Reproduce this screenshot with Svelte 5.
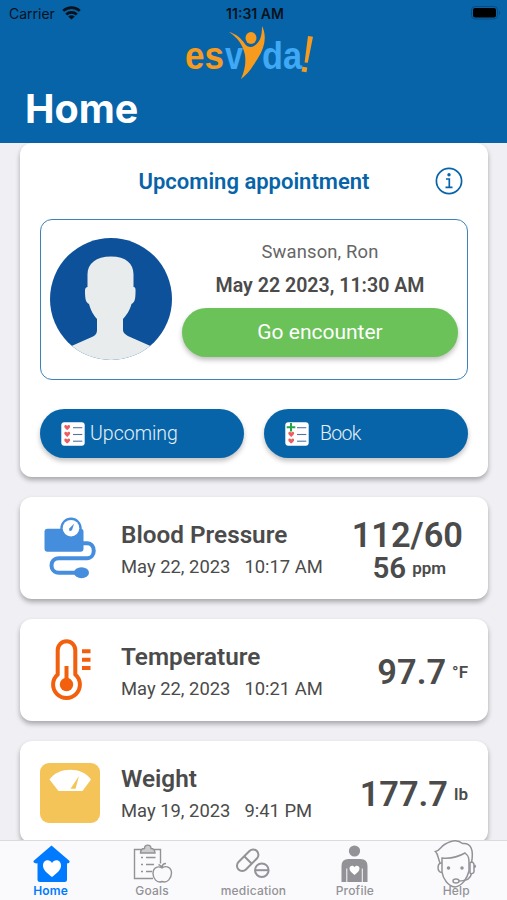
<script lang="ts">
type Reading = {
	id: string;
	title: string;
	date: string;
	time: string;
	value: string;
	unit?: string;
	second?: { value: string; unit: string };
};

const readings: Reading[] = [
	{
		id: 'pressure',
		title: 'Blood Pressure',
		date: 'May 22, 2023',
		time: '10:17 AM',
		value: '112/60',
		second: { value: '56', unit: 'ppm' },
	},
	{ id: 'temperature', title: 'Temperature', date: 'May 22, 2023', time: '10:21 AM', value: '97.7', unit: '°F' },
	{ id: 'weight', title: 'Weight', date: 'May 19, 2023', time: '9:41 PM', value: '177.7', unit: 'lb' },
];

const tabs = [
	{ id: 'home', label: 'Home' },
	{ id: 'goals', label: 'Goals' },
	{ id: 'medication', label: 'medication' },
	{ id: 'profile', label: 'Profile' },
	{ id: 'help', label: 'Help' },
];

let activeTab = $state('home');
</script>

{#snippet listIcon(withPlus: boolean)}
	<svg class="list-icon" viewBox="0 0 24 24">
		<rect x="0.3" y="0.3" width="23.4" height="23.4" rx="3" fill="#fff" />
		{#each [5.5, 12.3, 19] as y, i}
			{#if withPlus && i === 0}
				<path d="M6 1v8.6M1.7 5.3h8.6" stroke="#22a447" stroke-width="2" />
			{:else}
				<path
					transform="translate(6.2 {y})"
					d="M0 2.6C-1.5 1.4-2.9.3-2.9-1c0-1.7 2-2 2.9-.6C.9-3 2.9-2.7 2.9-1 2.9.3 1.5 1.4 0 2.6z"
					fill="#ee5d5d"
				/>
			{/if}
			<path d="M12 {y + 0.2}h9.3" stroke="#54749f" stroke-width="1.1" />
		{/each}
	</svg>
{/snippet}

<div class="app">
	<header>
		<div class="status-bar">
			<div class="carrier">
				<span>Carrier</span>
				<svg class="wifi" viewBox="0 0 19 14">
					<path d="M1.2 4.9a12 12 0 0 1 16.6 0" />
					<path d="M4.2 8.4a7.7 7.7 0 0 1 10.6 0" />
					<path d="M9.5 13.6 6.3 10.6a4.6 4.6 0 0 1 6.4 0z" class="dot" />
				</svg>
			</div>
			<span class="time">11:31 AM</span>
			<svg class="battery" viewBox="0 0 30 14">
				<rect x="0.5" y="0.5" width="26" height="12.5" rx="3.5" fill="none" stroke="#064b80" />
				<rect x="2" y="2" width="23" height="9.5" rx="2" />
				<path d="M28 4.5q2 2 0 4.5z" fill="#064b80" />
			</svg>
		</div>
		<svg class="logo" viewBox="0 0 132 54">
			<text x="0" y="42.500" fill="#f79b1e" textLength="39" lengthAdjust="spacingAndGlyphs">es</text>
			<text x="40" y="42.500" fill="#3fa9f5" textLength="18" lengthAdjust="spacingAndGlyphs">v</text>
			<text x="77" y="42.500" fill="#3fa9f5" textLength="40" lengthAdjust="spacingAndGlyphs">da</text>
			<path
				d="M44 6c7 2 12 6 16 12 2 3 6 4 9 2 6-4 8-9 8-20 5 10 3 21-4 32-5 8-9 15-17 21 4-9 5-16 4-24C58 19 53 12 44 6z"
				fill="#f79b1e"
			/>
			<ellipse cx="66" cy="12" rx="5.5" ry="6" fill="#f79b1e" />
			<path d="m123 10 5 .8-5.2 26-3.2-.4zM117.5 40.8l4.8.8-.8 4.6-5-.8z" fill="#f79b1e" />
		</svg>
		<h1>Home</h1>
	</header>

	<main>
		<section class="card appointment">
			<div class="appointment-title">
				<h2>Upcoming appointment</h2>
				<svg class="info" viewBox="0 0 28 28">
					<circle cx="14" cy="14" r="12.6" />
					<path d="M11 12h3.3v8M10.5 20.4h7" />
					<circle cx="14" cy="7.8" r="1.7" class="dot" />
				</svg>
			</div>

			<div class="encounter">
				<svg class="avatar" viewBox="0 0 122 122">
					<clipPath id="avatar-clip"><circle cx="61" cy="61" r="61" /></clipPath>
					<g clip-path="url(#avatar-clip)">
						<rect width="122" height="122" fill="#0e519b" />
						<path
							d="M61 18.500c15 0 22.500 7 22.500 18V49c2 0 2.200 2 2 6-.2 6-.5 9-4 11-2 7-5 11-8.500 15v11c0 3 3 5 6 6.500l21.500 9.500V122h-79v-14L43 98.500c3-1.500 4-3.500 4-6.500V81c-3.500-4-6-8-8-15-3.500-2-3.700-5-4-11-.2-4 .3-6 2.500-6V36.500c0-11 8.500-18 23.500-18z"
							fill="#e8ecec"
						/>
					</g>
				</svg>
				<div class="encounter-info">
					<span class="doctor">Swanson, Ron</span>
					<span class="when">May 22 2023, 11:30 AM</span>
					<button class="go">Go encounter</button>
				</div>
			</div>

			<div class="actions">
				<button class="action">
					{@render listIcon(false)}
					<span>Upcoming</span>
				</button>
				<button class="action book">
					{@render listIcon(true)}
					<span>Book</span>
				</button>
			</div>
		</section>

		{#each readings as reading}
			<section class="card reading">
				<svg class="reading-icon" viewBox="0 0 60 80">
					{#if reading.id === 'pressure'}
						<g transform="translate(0 2.2)">
							<g fill="#458ddd">
								<rect x="4.500" y="18.500" width="39" height="23" rx="3" />
								<circle cx="31" cy="18" r="10.700" />
								<ellipse cx="41.500" cy="62.500" rx="7.500" ry="5.500" />
							</g>
							<path d="M43 33h4c9 0 9 15 0 15H19c-10 0-10 14.500 0 14.500h17" fill="none" stroke="#458ddd" stroke-width="4" />
							<circle cx="31" cy="18" r="8.300" fill="#fff" />
							<path d="m34 13.500-2 6.500-2.500 1-.5-2.500z" fill="#458ddd" />
						</g>
					{:else if reading.id === 'temperature'}
						<path
							d="M17.700 44.400V20.100a8.800 8.800 0 0 1 17.600 0v24.300a13.400 13.400 0 1 1-17.600 0z"
							fill="none"
							stroke="#f2600d"
							stroke-width="4"
						/>
						<circle cx="26.500" cy="54.500" r="6.700" fill="#f2600d" />
						<path d="M26.500 36v16M42 21.300h8.500M42 29.700h8.500M42 38h8.500" stroke="#f2600d" stroke-width="4" />
					{:else}
						<rect y="11" width="60" height="60" rx="9" fill="#f4c459" />
						<path d="M9.500 27.500c9-13 32.500-13 41.500 0L42.500 39H18.500z" fill="#fff" />
						<path d="m39 24-3.500 12.800h-5z" fill="#f4c459" />
					{/if}
				</svg>
				<div class="reading-info">
					<h3>{reading.title}</h3>
					<p>
						<span>{reading.date}</span>
						<span>{reading.time}</span>
					</p>
				</div>
				<div class="reading-value" class:double={reading.second}>
					<div class="value">
						<strong>{reading.value}</strong>
						{#if reading.unit}
							<span class="unit">{reading.unit}</span>
						{/if}
					</div>
					{#if reading.second}
						<div class="value second">
							<strong>{reading.second.value}</strong>
							<span class="unit">{reading.second.unit}</span>
						</div>
					{/if}
				</div>
			</section>
		{/each}
	</main>

	<nav>
		{#each tabs as tab}
			<button class="tab" class:active={activeTab === tab.id} onclick={() => (activeTab = tab.id)}>
				<svg class="tab-icon" viewBox="0 0 44 44">
					{#if tab.id === 'home'}
						<path d="M22.500 4.500 40 19.500c1.500 1.500 0 3.300-2 2.800V38.500q0 2.500-2.500 2.500H11q-2.500 0-2.500-2.500V22.300c-3 .5-5-1.300-3.500-2.800z" fill="currentColor" />
						<path d="M23 36c-4.500-3.500-9-7-9-11.500 0-5.500 6.500-7 9-2.500 2.500-4.500 9-3 9 2.500 0 4.500-4.500 8-9 11.500z" fill="#fff" />
					{:else if tab.id === 'goals'}
						<g fill="none" stroke="currentColor" stroke-width="1.400">
							<path d="M11 8.500H4.500v29H23M24 8.500h6.500v14" />
							<path d="M10.500 12h14.500c0-3-1.500-4.500-4-4.500 0-4.500-6.500-4.500-6.500 0-2.500 0-4 1.500-4 4.500z" fill="#ccc" />
							<path d="M11 16.500h2M16 16.500h9.500M11 23.500h2M16 23.500h8M11 30.500h2M16 30.500h6" />
							<path d="M32 27c-4-2.500-9-.5-9 5.500 0 5 4 10 9 8 5.500 2 9.500-3.500 9.500-8.500 0-5.500-5-8-9.500-5zM32 27c0-3 1.500-4.500 4-4.500M32 27c-.5-2-1.500-3-3.500-3.500" />
						</g>
					{:else if tab.id === 'medication'}
						<g fill="none" stroke="currentColor" stroke-width="2">
							<rect x="3.700" y="14" width="26" height="10.500" rx="5.250" transform="rotate(-45 16.700 19.250)" />
							<path d="m13 15 8 8" />
							<circle cx="30.800" cy="29.200" r="6.800" />
							<path d="M24 29.200h13.500" />
						</g>
					{:else if tab.id === 'profile'}
						<circle cx="21.500" cy="10" r="5.600" fill="currentColor" />
						<path d="M8.500 41V25q0-7 7-7h12q7 0 7 7v16h-4.700V27.500h-1V41H14.300V27.500h-1V41z" fill="currentColor" />
						<path d="M21.500 34c-3-2.400-5-4-5-6.400 0-3.200 3.700-3.800 5-1.300 1.300-2.500 5-1.900 5 1.300 0 2.400-2 4-5 6.400z" fill="#fff" />
					{:else}
						<g fill="none" stroke="currentColor" stroke-width="1.500">
							<path d="M6 22C4 17 4 13 1.500 10.500c4-.5 5-4.500 9-7C17-.5 24-1.500 28.500 2.500 37 1.500 40 9 37.500 22" />
							<path d="M8 22v-5c9 1 16-1 23-5 4 3 4 6 4 10v8c-2 8-7 15-14 16C14 45 9 38 8 31z" />
							<path d="M8 22c-5-1-5.500 9 0 9.500M36 22c2-2 4-.5 4 2v7c-1 2-3 2-4 1zM39.500 26.500c2.500 0 2.500-2.500 0-2.500M37.500 32.500c-1 5-4 7.500-13 7.500" />
							<ellipse cx="22" cy="40" rx="3" ry="2" />
							<circle cx="14.500" cy="27" r="1" fill="currentColor" />
							<circle cx="28" cy="27" r="1" fill="currentColor" />
						</g>
					{/if}
				</svg>
				<span class="tab-label">{tab.label}</span>
			</button>
		{/each}
	</nav>
</div>

<style>
	:global(body) {
		margin: 0;
	}

	.app {
		display: flex;
		flex-direction: column;
		width: 507px;
		height: 900px;
		overflow: hidden;
		background: #efeff4;
		color: #4b4b4b;
		font-family: Roboto, sans-serif;
	}

	button {
		border: 0;
		padding: 0;
		font-family: inherit;
		cursor: pointer;
	}

	h1,
	h2,
	h3,
	p {
		margin: 0;
	}

	header {
		flex: none;
		height: 143px;
		background: #0764a9;
		font-family: Inter, sans-serif;
	}

	.status-bar {
		display: grid;
		grid-template-columns: 1fr auto 1fr;
		align-items: center;
		height: 26px;
		padding: 0 6px 0 9px;
		font-size: 14px;
		color: #08121c;
	}

	.carrier {
		display: flex;
		align-items: center;
		gap: 7px;
	}

	.wifi {
		width: 19px;
		height: 14px;
		fill: none;
		stroke: #08121c;
		stroke-width: 2.7;
	}

	.wifi .dot {
		fill: #08121c;
		stroke: none;
	}

	.time {
		font-weight: 600;
	}

	.battery {
		justify-self: end;
		width: 30px;
		height: 14px;
	}

	.logo {
		display: block;
		width: 132px;
		height: 54px;
		margin-left: 185px;
		font-family: "Liberation Sans", sans-serif;
		font-size: 38px;
		font-weight: 700;
	}

	h1 {
		padding-left: 25px;
		font-size: 39.5px;
		line-height: 58px;
		font-weight: 700;
		color: #fff;
	}

	main {
		flex: 1;
		min-height: 0;
		overflow: hidden;
		display: flex;
		flex-direction: column;
		gap: 20px;
		padding: 0 19px 0 20px;
	}

	.card {
		flex: none;
		box-sizing: border-box;
		border-radius: 12px;
		background: #fff;
		box-shadow: 0 3px 5px rgba(0, 0, 0, 0.3);
	}

	.appointment {
		height: 334px;
		padding: 18px 20px 20px;
	}

	.appointment-title {
		display: grid;
		grid-template-columns: 28px 1fr 28px;
		align-items: center;
		height: 40px;
		padding: 0 5px;
		margin-bottom: 18px;
	}

	h2 {
		grid-column: 2;
		font-size: 22px;
		font-weight: 600;
		text-align: center;
		color: #0764a9;
	}

	.info {
		width: 28px;
		height: 28px;
		fill: none;
		stroke: #0764a9;
		stroke-width: 1.7;
	}

	.info .dot {
		fill: #0764a9;
		stroke: none;
	}

	.encounter {
		display: flex;
		align-items: center;
		gap: 10px;
		box-sizing: border-box;
		height: 161px;
		padding: 0 9px 2px;
		border: 1.5px solid #3c82b9;
		border-radius: 12px;
	}

	.avatar {
		flex: none;
		width: 122px;
		height: 122px;
	}

	.encounter-info {
		flex: 1;
		display: flex;
		flex-direction: column;
		align-items: center;
		padding-bottom: 6px;
	}

	.doctor {
		font-size: 18.4px;
		line-height: 33px;
		letter-spacing: 0.15px;
		color: #666;
	}

	.when {
		margin-bottom: 4px;
		font-size: 19.6px;
		line-height: 36px;
		font-weight: 600;
	}

	.go {
		width: 100%;
		height: 49px;
		border-radius: 25px;
		background: #6bc259;
		box-shadow: 0 3px 5px rgba(0, 0, 0, 0.25);
		font-size: 21px;
		color: #fff;
	}

	.actions {
		display: flex;
		gap: 20px;
		margin-top: 29px;
	}

	.action {
		flex: 1;
		display: flex;
		align-items: center;
		gap: 5px;
		height: 49px;
		padding-left: 21px;
		border-radius: 25px;
		background: #0764a9;
		box-shadow: 0 3px 5px rgba(0, 0, 0, 0.25);
		font-size: 19.5px;
		font-weight: 300;
		color: #e6f0f8;
	}

	.action.book {
		gap: 11px;
		letter-spacing: -0.7px;
	}

	.list-icon {
		width: 24px;
		height: 24px;
	}

	.reading {
		display: flex;
		align-items: center;
		height: 102px;
		padding: 0 20px;
	}

	.reading-icon {
		flex: none;
		width: 60px;
		height: 80px;
	}

	.reading-info {
		flex: 1;
		padding: 6px 0 0 21px;
	}

	h3 {
		font-size: 24.3px;
		line-height: 32px;
		font-weight: 600;
	}

	.reading-info p {
		display: flex;
		gap: 14px;
		font-size: 18.4px;
		line-height: 32px;
		white-space: nowrap;
	}

	.reading-value {
		display: flex;
		flex-direction: column;
		align-items: center;
		padding-top: 4px;
	}

	.reading-value.double {
		padding-right: 5px;
	}

	.value {
		display: flex;
		align-items: center;
		gap: 6px;
		line-height: 36px;
	}

	strong {
		font-size: 34.4px;
		line-height: inherit;
		font-weight: 600;
	}

	.unit {
		font-size: 17px;
		line-height: 20px;
		font-weight: 600;
	}

	.second {
		line-height: 30px;
		padding-left: 4px;
	}

	.second strong {
		font-size: 29.5px;
	}

	nav {
		flex: none;
		display: grid;
		grid-template-columns: repeat(5, 1fr);
		box-sizing: border-box;
		height: 60px;
		border-top: 1px solid #dcdce0;
		background: #fafafc;
	}

	.tab {
		display: flex;
		flex-direction: column;
		align-items: center;
		background: none;
		color: #929297;
	}

	.tab.active {
		color: #007aff;
	}

	.tab-icon {
		flex: none;
		width: 44px;
		height: 44px;
		overflow: visible;
	}

	.tab-label {
		font-family: Inter, sans-serif;
		font-size: 12px;
		line-height: 12px;
		font-weight: 500;
		letter-spacing: 0.2px;
	}

	.tab.active .tab-label {
		font-weight: 600;
	}
</style>
